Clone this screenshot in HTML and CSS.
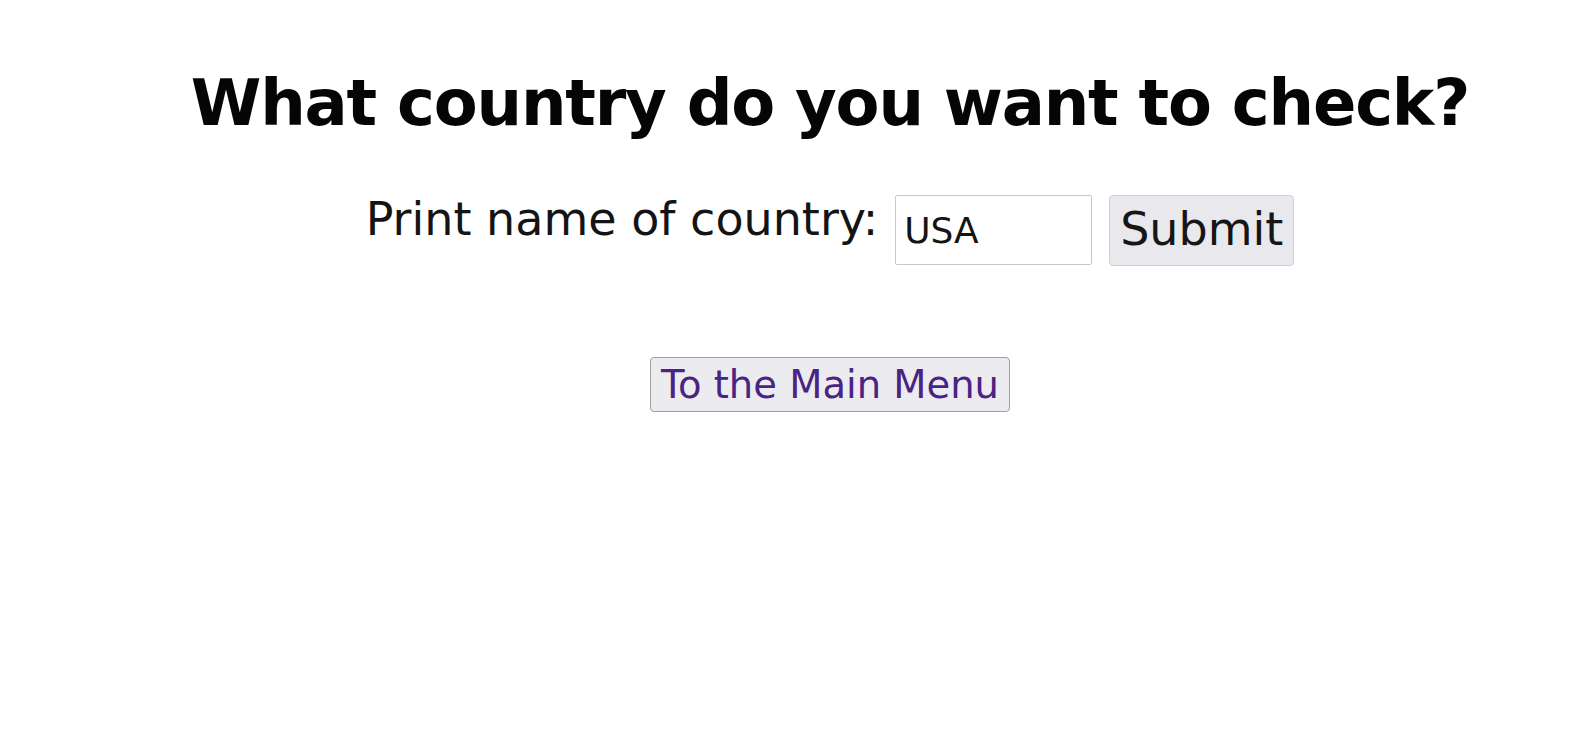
FILE: index.html
```html
<!DOCTYPE html>
<html lang="en">
<head>
<meta charset="utf-8">
<title>Check country</title>
<link rel="stylesheet" href="styles.css">
</head>
<body>
<main class="page">
  <h1 class="title">What country do you want to check?</h1>
  <form class="country-form">
    <label class="label" for="country">Print name of country:</label>
    <input class="field" id="country" type="text" value="USA">
    <button class="submit" type="button">Submit</button>
  </form>
  <div class="menu-row">
    <button class="menu-btn" type="button">To the Main Menu</button>
  </div>
</main>
</body>
</html>
```

FILE: styles.css
```css
html, body {
  margin: 0;
  padding: 0;
  background: #ffffff;
}
body {
  font-family: "DejaVu Sans", Verdana, sans-serif;
  color: #111111;
}
.page {
  padding-left: 74px;
  display: flex;
  flex-direction: column;
  align-items: center;
}
.title {
  margin: 63px 0 0 0;
  font-size: 64px;
  letter-spacing: -1.2px;
  font-weight: bold;
  line-height: 80px;
  color: #050505;
}
.country-form {
  margin-top: 48px;
  display: flex;
  align-items: flex-start;
  gap: 17px;
}
.label {
  font-size: 46px;
  line-height: 56px;
  color: #141414;
}
.field {
  box-sizing: border-box;
  width: 197px;
  height: 70px;
  margin-top: 4px;
  padding: 0 8px;
  font-family: "DejaVu Sans", Verdana, sans-serif;
  font-size: 36px;
  color: #141414;
  border: 1.5px solid #c8c8c8;
  border-radius: 2px;
  background: #ffffff;
}
.submit {
  box-sizing: border-box;
  height: 71px;
  margin-top: 4px;
  padding: 0 10px 4px 10px;
  font-family: "DejaVu Sans", Verdana, sans-serif;
  font-size: 46px;
  color: #161616;
  background: #e9e9ed;
  border: 1.5px solid #cfcfd3;
  border-radius: 4px;
}
.menu-row {
  margin-top: 91px;
}
.menu-btn {
  box-sizing: border-box;
  height: 55px;
  padding: 0 10px;
  font-family: "DejaVu Sans", Verdana, sans-serif;
  font-size: 38.5px;
  color: #4a2384;
  background: #ececf0;
  border: 1.5px solid #a0a0a4;
  border-radius: 4px;
}
```
